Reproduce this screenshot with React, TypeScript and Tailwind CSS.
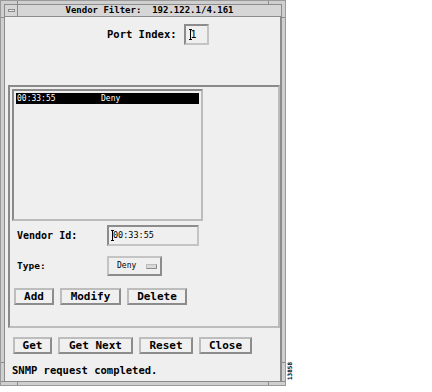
const mono = "font-['DejaVu_Sans_Mono','Liberation_Mono',monospace]"

function Cursor() {
  // little I-beam text cursor drawn before the first character
  return (
    <span className="inline-flex flex-col items-center w-[3px] h-[11px] mr-[-1px]">
      <span className="w-[3px] h-px bg-black" />
      <span className="w-px flex-1 bg-black" />
      <span className="w-[3px] h-px bg-black" />
    </span>
  )
}

function Button({ label, w }: { label: string; w: string }) {
  return (
    <div
      className={`${w} h-[17px] flex items-center justify-center border-2 border-[#bdbdbd] border-b-[#8c8c8c] border-r-[#8c8c8c] bg-[#f0f0f0] text-[11px] font-bold leading-none`}
    >
      {label}
    </div>
  )
}

export default function App() {
  return (
    <div className={`w-[432px] h-[392px] bg-white text-black ${mono} flex items-start`}>
      {/* window frame */}
      <div className="w-[286px] h-[386px] flex flex-col bg-[#cfcfcf] border border-[#9a9a9a]">
        {/* top resize edge */}
        <div className="h-[3px] flex">
          <div className="w-[17px] border-r border-[#8c8c8c]" />
          <div className="flex-1 border-r border-[#8c8c8c]" />
          <div className="w-[16px]" />
        </div>
        <div className="flex-1 flex">
          <div className="w-[4px] flex flex-col border-r border-[#8c8c8c]">
            <div className="h-[14px] border-b border-[#8c8c8c]" />
            <div className="flex-1 border-b border-[#8c8c8c]" />
            <div className="h-[18px]" />
          </div>
          <div className="flex-1 flex flex-col">
            {/* title bar */}
            <div className="h-[13px] flex bg-[#d6d6d6] border-y border-[#8c8c8c]">
              <div className="w-[13px] flex items-center justify-center border-r border-[#8c8c8c]">
                <div className="w-[7px] h-[3px] border border-[#8c8c8c] bg-[#e6e6e6]" />
              </div>
              <div className="flex-1 flex items-center justify-center text-[9px] font-bold leading-none whitespace-pre">
                Vendor Filter:  192.122.1/4.161
              </div>
            </div>
            {/* body */}
            <div className="flex-1 flex flex-col bg-[#efefef] border-r border-[#8c8c8c]">
              <div className="mt-[7px] ml-[102px] flex items-center gap-[7px]">
                <span className="text-[10.5px] font-bold leading-none">Port Index:</span>
                <div className="w-[25px] h-[21px] flex items-center pl-[3px] border-2 border-[#8c8c8c] border-b-[#c4c4c4] border-r-[#c4c4c4] text-[10px] leading-none">
                  <Cursor />1
                </div>
              </div>

              {/* group panel */}
              <div className="mt-[40px] ml-[3px] w-[272px] h-[243px] flex flex-col border-2 border-[#8a8a8a] border-b-[#bcbcbc] border-r-[#bcbcbc]">
                <div className="mt-[2px] ml-[2px] w-[191px] h-[132px] border-2 border-[#8a8a8a] border-b-[#bcbcbc] border-r-[#bcbcbc] p-[2px]">
                  <div className="h-[11px] bg-black text-white flex items-center text-[8px] leading-none">
                    <span className="w-[85px] pl-[1px]">00:33:55</span>
                    <span>Deny</span>
                  </div>
                </div>

                <div className="mt-[4px] flex items-center">
                  <span className="ml-[7px] w-[90px] text-[10px] font-bold leading-none">Vendor Id:</span>
                  <div className="w-[92px] h-[21px] flex items-center pl-[2px] border-2 border-[#8c8c8c] border-b-[#c4c4c4] border-r-[#c4c4c4] text-[8.5px] leading-none">
                    <Cursor />00:33:55
                  </div>
                </div>

                <div className="mt-[10px] flex items-center">
                  <span className="ml-[7px] w-[90px] text-[9.5px] font-bold leading-none">Type:</span>
                  <div className="w-[55px] h-[20px] flex items-center border-2 border-[#c4c4c4] border-b-[#8c8c8c] border-r-[#8c8c8c] text-[8px] leading-none">
                    <span className="ml-[8px] w-[29px]">Deny</span>
                    <span className="w-[11px] h-[5px] border border-[#bdbdbd] border-b-[#8c8c8c] border-r-[#8c8c8c] bg-[#d8d8d8]" />
                  </div>
                </div>

                <div className="mt-[12px] ml-[4px] flex gap-[6px]">
                  <Button label="Add" w="w-[40px]" />
                  <Button label="Modify" w="w-[61px]" />
                  <Button label="Delete" w="w-[60px]" />
                </div>
              </div>

              <div className="mt-[9px] ml-[8px] flex gap-[6px]">
                <Button label="Get" w="w-[39px]" />
                <Button label="Get Next" w="w-[75px]" />
                <Button label="Reset" w="w-[54px]" />
                <Button label="Close" w="w-[53px]" />
              </div>

              <div className="mt-[11px] ml-[7px] text-[10.5px] font-bold leading-none">
                SNMP request completed.
              </div>
            </div>
          </div>
          <div className="w-[4px] flex flex-col border-l border-[#8c8c8c]">
            <div className="h-[14px] border-b border-[#8c8c8c]" />
            <div className="flex-1 border-b border-[#8c8c8c]" />
            <div className="h-[18px]" />
          </div>
        </div>
        {/* bottom resize edge */}
        <div className="h-[4px] flex border-t border-[#8c8c8c]">
          <div className="w-[17px] border-r border-[#8c8c8c]" />
          <div className="flex-1 border-r border-[#8c8c8c]" />
          <div className="w-[16px]" />
        </div>
      </div>
      {/* figure id */}
      <div className="mt-[362px] ml-[1px] text-[6px] font-bold leading-none [writing-mode:vertical-rl] rotate-180">
        13858
      </div>
    </div>
  )
}
